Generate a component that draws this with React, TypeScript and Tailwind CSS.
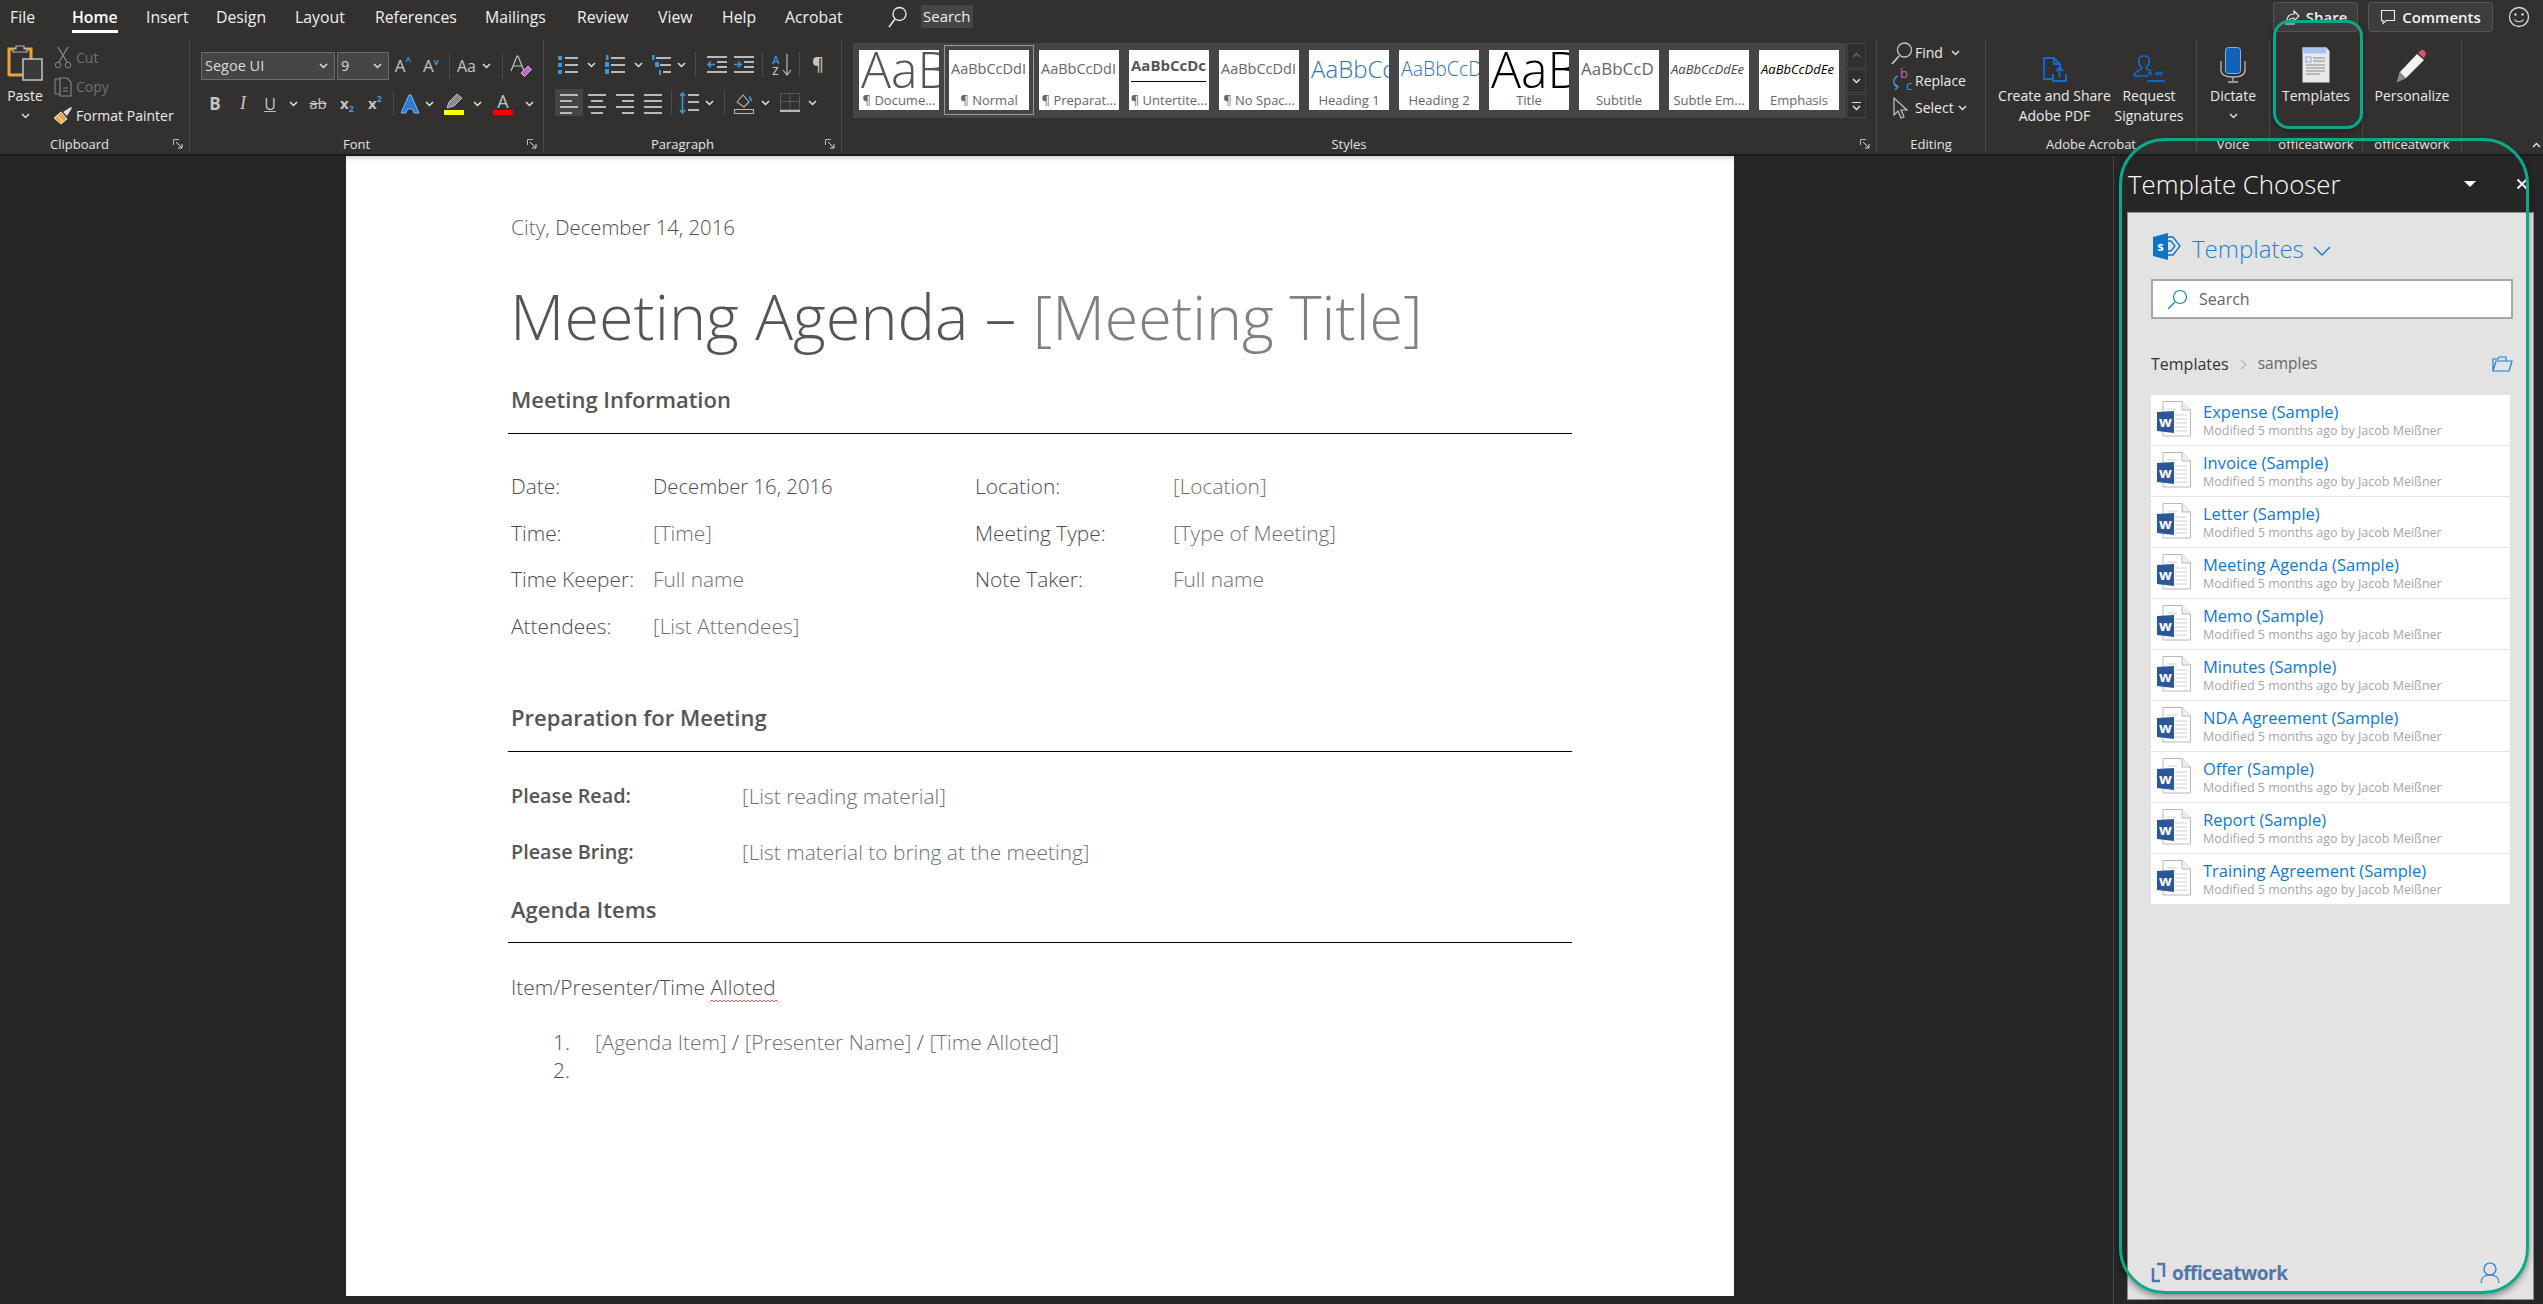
import type { ReactNode } from "react";

const tabs = [
  { name: "File", w: "w-[72px] pl-[10px]" },
  { name: "Home", w: "w-[74px]", active: true },
  { name: "Insert", w: "w-[70px]" },
  { name: "Design", w: "w-[79px]" },
  { name: "Layout", w: "w-[80px]" },
  { name: "References", w: "w-[110px]" },
  { name: "Mailings", w: "w-[92px]" },
  { name: "Review", w: "w-[81px]" },
  { name: "View", w: "w-[64px]" },
  { name: "Help", w: "w-[63px]" },
  { name: "Acrobat", w: "w-[90px]" },
];

const gallery = [
  { label: "¶ Docume...", sample: "AaB", cls: "text-[50px] font-light text-[#555] leading-[38px]" },
  { label: "¶ Normal", sample: "AaBbCcDdI", cls: "text-[14.5px] text-[#666] leading-[38px]", selected: true },
  { label: "¶ Preparat...", sample: "AaBbCcDdI", cls: "text-[14.5px] text-[#666] leading-[38px]" },
  { label: "¶ Untertite...", sample: "AaBbCcDc", cls: "text-[15px] font-bold text-[#555] leading-[31px] border-b border-black" },
  { label: "¶ No Spac...", sample: "AaBbCcDdI", cls: "text-[14.5px] text-[#666] leading-[38px]" },
  { label: "Heading 1", sample: "AaBbCc", cls: "text-[24px] font-light text-[#2e74b5] leading-[38px]" },
  { label: "Heading 2", sample: "AaBbCcD", cls: "text-[19.5px] font-light text-[#2e74b5] leading-[38px]" },
  { label: "Title", sample: "AaB", cls: "text-[50px] font-light text-black leading-[38px]" },
  { label: "Subtitle", sample: "AaBbCcD", cls: "text-[17px] text-[#666] leading-[38px]" },
  { label: "Subtle Em...", sample: "AaBbCcDdEe", cls: "text-[13px] italic text-[#444] leading-[38px]" },
  { label: "Emphasis", sample: "AaBbCcDdEe", cls: "text-[13px] italic text-black leading-[38px]" },
];

const templates = [
  "Expense (Sample)",
  "Invoice (Sample)",
  "Letter (Sample)",
  "Meeting Agenda (Sample)",
  "Memo (Sample)",
  "Minutes (Sample)",
  "NDA Agreement (Sample)",
  "Offer (Sample)",
  "Report (Sample)",
  "Training Agreement (Sample)",
];

const GRAY = "#b9b9b9";
const BLUE = "#3a96dd";

function Chevron({ color = "#e0e0e0" }: { color?: string }) {
  return (
    <svg width="9" height="6" viewBox="0 0 9 6" fill="none" className="shrink-0">
      <path d="M1 1l3.500 3.500L8 1" stroke={color} strokeWidth="1.500" />
    </svg>
  );
}

function Cell({ w, children, active }: { w: string; children?: ReactNode; active?: boolean }) {
  return (
    <div className={`${w} ${active ? "bg-[#454545]" : ""} h-[27px] shrink-0 flex items-center justify-center text-[#c4c4c4]`}>
      {children}
    </div>
  );
}

function ChevCell({ w }: { w: string }) {
  return (
    <Cell w={w}>
      <Chevron />
    </Cell>
  );
}

function Sep({ w }: { w: string }) {
  return (
    <Cell w={w}>
      <div className="w-px h-[25px] bg-[#4c4c4c] shrink-0" />
    </Cell>
  );
}

function Launcher() {
  return (
    <svg width="11" height="11" viewBox="0 0 11 11" fill="none" className="absolute right-[5px] top-[3px]">
      <path d="M.5 6V.5H6" stroke="#bbb" />
      <path d="M3 3l5.500 5.500M5 9h4V5" stroke="#ddd" />
    </svg>
  );
}

function Group({ w, label, launcher, pad = "", children }: { w: string; label: string; launcher?: boolean; pad?: string; children: ReactNode }) {
  return (
    <div className={`${w} h-[112px] shrink-0 flex flex-col border-r border-[#4a4a4a]`}>
      <div className="h-[96px] shrink-0">{children}</div>
      <div className={`${pad} relative h-[16px] leading-[16px] text-center text-[13px] text-[#e4e4e4] whitespace-nowrap`}>
        {label}
        {launcher && <Launcher />}
      </div>
    </div>
  );
}

function BigButton({ icon, lines, chevron, w }: { icon: ReactNode; lines: string[]; chevron?: boolean; w: string }) {
  return (
    <div className={`${w} shrink-0 flex flex-col items-center text-[14px] text-[#ececec] leading-[20px] whitespace-nowrap`}>
      <div className="h-[46px] w-full flex items-end justify-center pb-[3px]">{icon}</div>
      {lines.map((l) => (
        <div key={l}>{l}</div>
      ))}
      {chevron && (
        <div className="h-[20px] flex items-center">
          <Chevron />
        </div>
      )}
    </div>
  );
}

function LinesIcon({ rows, color = GRAY, w = 26 }: { rows: [number, number][]; color?: string; w?: number }) {
  return (
    <svg width={w} height="22" viewBox={`0 0 ${w} 22`} fill="none">
      {rows.map(([x, l], i) => (
        <rect key={i} x={x} y={2 + i * 6} width={l} height="2" fill={color} />
      ))}
    </svg>
  );
}

function PasteIcon() {
  return (
    <svg width="38" height="40" viewBox="0 0 38 40" fill="none">
      <path d="M3 33V6h22v26H3z" stroke="#e8a33d" strokeWidth="3" />
      <path d="M10 6V3h8v3h3v3H7V6z" stroke="#b5b5b5" strokeWidth="1.200" fill="#323130" />
      <rect x="17" y="16" width="19" height="21" fill="#3a3a3a" stroke="#c4c4c4" strokeWidth="1.500" />
    </svg>
  );
}

function WordIcon() {
  return (
    <svg width="34" height="36" viewBox="0 0 34 36" className="shrink-0">
      <path d="M6 .5h19L33.500 9v26H6z" fill="#fff" stroke="#b8b8b8" />
      <path d="M25 .5V9h8.500" fill="#eee" stroke="#b8b8b8" />
      <path d="M18 14h12M18 18h12M18 22h12M18 26h12M18 30h12M10 8h10" stroke="#cfcfcf" strokeWidth="1.200" />
      <path d="M0 11l17-1v22L0 30z" fill="#2b579a" />
      <text x="8.500" y="25.500" textAnchor="middle" fontSize="15" fontWeight="700" fill="#fff" fontFamily="Open Sans, sans-serif">
        w
      </text>
    </svg>
  );
}

function Wavy() {
  let d = "M0 3";
  for (let i = 0; i < 34; i++) d += i % 2 ? "l2 2" : "l2-2";
  return (
    <svg width="68" height="4" viewBox="0 0 68 4" className="absolute left-0 -bottom-[2px]" fill="none">
      <path d={d} stroke="#d9382e" strokeWidth=".8" />
    </svg>
  );
}

function Heading({ children }: { children: ReactNode }) {
  return <div className="pl-[3px] text-[22px] leading-[30px] font-semibold text-[#555]">{children}</div>;
}

function Rule({ className }: { className: string }) {
  return <div className={`h-px bg-black w-[1064px] ${className}`} />;
}

function Ribbon() {
  return (
    <div className="h-[156px] shrink-0 bg-[#323130] text-[#f0f0f0] border-b-[2px] border-[#1a1a1a]">
      <div className="h-[40px] flex items-start relative text-[15.8px]">
        {tabs.map((t) => (
          <div key={t.name} className={`${t.w} h-[36px] pt-[5px] leading-[24px] ${t.active ? "font-semibold text-white" : ""}`}>
            <span className={t.active ? "inline-block border-b-[3px] border-white pb-[2px] leading-[22px]" : ""}>{t.name}</span>
          </div>
        ))}
        <div className="ml-[13px] mt-[5px] flex items-center gap-[13px]">
          <svg width="20" height="22" viewBox="0 0 20 22" fill="none">
            <circle cx="11.500" cy="8" r="6.500" stroke="#eee" strokeWidth="1.300" />
            <path d="M7 13l-6 8" stroke="#eee" strokeWidth="1.500" />
          </svg>
          <span className="bg-[#454545] h-[23px] leading-[23px] px-[2px] text-[15px] text-[#f0f0f0]">Search</span>
        </div>
        <div className="ml-auto flex items-center mt-[2px] mr-[13px] text-[15px]">
          <div className="w-[85px] h-[30px] rounded-[3px] bg-[#3d3d3d] border border-[#555] flex items-center justify-center gap-[6px] font-semibold text-[#f4f4f4]">
            <svg width="16" height="16" viewBox="0 0 16 16" fill="none">
              <path d="M1 15h10M3 12c0-5 3-7 7-7V2l5 5-5 5V9c-3 0-5 1-6 4" stroke="#eee" strokeWidth="1.200" />
            </svg>
            Share
          </div>
          <div className="ml-[10px] w-[125px] h-[30px] rounded-[3px] bg-[#3d3d3d] border border-[#555] flex items-center justify-center gap-[6px] font-semibold text-[#f4f4f4]">
            <svg width="16" height="16" viewBox="0 0 16 16" fill="none">
              <path d="M1.500 1.500h13v10H6l-3 3v-3H1.500z" stroke="#eee" strokeWidth="1.100" />
            </svg>
            Comments
          </div>
          <svg width="22" height="22" viewBox="0 0 22 22" fill="none" className="ml-[15px]">
            <circle cx="11" cy="11" r="9.500" stroke="#ddd" strokeWidth="1.300" />
            <circle cx="7.500" cy="8.500" r="1.200" fill="#ddd" />
            <circle cx="14.500" cy="8.500" r="1.200" fill="#ddd" />
            <path d="M6.500 13.500c2 3 7 3 9 0" stroke="#ddd" strokeWidth="1.200" />
          </svg>
        </div>
      </div>

      <div className="flex text-[14px]">
        <Group w="w-[190px]" label="Clipboard" launcher pad="pr-[30px]">
          <div className="flex">
            <BigButton w="w-[50px]" icon={<PasteIcon />} lines={["Paste"]} chevron />
            <div className="pl-[4px] pt-[3px] flex flex-col text-[14px] leading-[29px]">
              <div className="flex items-center gap-[4px] text-[#707070]">
                <svg width="18" height="24" viewBox="0 0 18 24" fill="none">
                  <path d="M4 1l9 15M14 1L5 16" stroke="#8a8a8a" strokeWidth="1.300" />
                  <circle cx="4" cy="19" r="2.800" stroke="#8a8a8a" />
                  <circle cx="14" cy="19" r="2.800" stroke="#8a8a8a" />
                </svg>
                Cut
              </div>
              <div className="flex items-center gap-[4px] text-[#707070]">
                <svg width="18" height="22" viewBox="0 0 18 22" fill="none">
                  <path d="M6 3H1v15h5" stroke="#8a8a8a" />
                  <path d="M6 2h7l4 4v14H6zM9 12h5M9 15h5" stroke="#8a8a8a" strokeWidth="1.100" />
                </svg>
                Copy
              </div>
              <div className="flex items-center gap-[3px] -ml-px text-[#ececec]">
                <svg width="20" height="20" viewBox="0 0 20 20" fill="none">
                  <path d="M1 12l7-6 6 7-6 5z" fill="#eba741" stroke="#f5f5f5" strokeWidth=".9" />
                  <path d="M4 9l6 7" stroke="#f5f5f5" />
                  <path d="M10 6l8-5 1 1-5 8z" fill="#ddd" />
                </svg>
                Format Painter
              </div>
            </div>
          </div>
        </Group>

        <Group w="w-[354px]" label="Font" launcher pad="pr-[20px]">
          <div className="pl-[11px] pt-[12px] flex flex-col gap-[10px]">
            <div className="flex items-center">
              <div className="w-[134px] h-[28px] bg-[#454545] border border-[#6c6c6c] flex items-center justify-between pl-[3px] pr-[6px] text-[14.5px] text-[#dcdcdc]">
                Segoe UI
                <Chevron />
              </div>
              <div className="ml-[2px] w-[52px] h-[28px] bg-[#454545] border border-[#6c6c6c] flex items-center justify-between pl-[3px] pr-[6px] text-[14.5px] text-[#dcdcdc]">
                9
                <Chevron />
              </div>
              <Cell w="w-[28px]">
                <span className="text-[17px]">A</span>
                <span className="text-[10px] -mt-[10px] font-bold text-[#3a96dd]">^</span>
              </Cell>
              <Cell w="w-[28px]">
                <span className="text-[17px]">A</span>
                <span className="text-[9px] -mt-[9px] font-bold text-[#3a96dd]">v</span>
              </Cell>
              <Sep w="w-[8px]" />
              <Cell w="w-[27px]">
                <span className="text-[16px]">Aa</span>
              </Cell>
              <ChevCell w="w-[12px]" />
              <Sep w="w-[20px]" />
              <Cell w="w-[18px]">
                <svg width="22" height="24" viewBox="0 0 22 24" fill="none" className="shrink-0">
                  <path d="M1 17L7 2h1l6 15M3 12h9" stroke="#c4c4c4" strokeWidth="1.200" />
                  <path d="M11 19l7-7 3.500 3.500-7 7z" fill="#b968c7" stroke="#e6a9ee" />
                </svg>
              </Cell>
            </div>
            <div className="flex items-center">
              <Cell w="w-[28px]"><span className="font-bold text-[17px]">B</span></Cell>
              <Cell w="w-[28px]"><span className="italic font-['Liberation_Serif'] text-[18px]">I</span></Cell>
              <Cell w="w-[26px]"><span className="underline text-[16px]">U</span></Cell>
              <ChevCell w="w-[20px]" />
              <Cell w="w-[30px]"><span className="line-through text-[15px]">ab</span></Cell>
              <Cell w="w-[28px]"><span className="font-bold text-[15px]">x</span><span className="text-[9px] font-bold text-[#3a96dd] mt-[10px]">2</span></Cell>
              <Cell w="w-[28px]"><span className="font-bold text-[15px]">x</span><span className="text-[9px] font-bold text-[#3a96dd] -mt-[10px]">2</span></Cell>
              <Sep w="w-[8px]" />
              <Cell w="w-[26px]">
                <svg width="22" height="22" viewBox="0 0 22 22" fill="none">
                  <path d="M2 20L10 2h2l8 18h-5l-1.500-4h-5L7 20z" fill="#2b7cd3" stroke="#7ab8ee" />
                </svg>
              </Cell>
              <ChevCell w="w-[12px]" />
              <Cell w="w-[38px]">
                <div className="flex flex-col items-center">
                  <svg width="20" height="17" viewBox="0 0 20 17" fill="none">
                    <path d="M3 15l2-6L13 1l5 4-8 8z" fill="#8a8a8a" stroke="#bbb" />
                  </svg>
                  <div className="w-[20px] h-[5px] bg-[#ffff00]" />
                </div>
              </Cell>
              <ChevCell w="w-[8px]" />
              <Cell w="w-[44px]">
                <div className="flex flex-col items-center">
                  <span className="text-[18px] leading-[18px]">A</span>
                  <div className="w-[20px] h-[5px] bg-[#ff0000]" />
                </div>
              </Cell>
              <ChevCell w="w-[8px]" />
            </div>
          </div>
        </Group>

        <Group w="w-[298px]" label="Paragraph" launcher pad="pr-[20px]">
          <div className="pt-[11px] flex flex-col gap-[11px]">
            <div className="flex items-center pl-[9px]">
              <Cell w="w-[30px]">
                <svg width="20" height="20" viewBox="0 0 20 20">
                  <rect y="1" width="4" height="4" fill={BLUE} /><rect y="8" width="4" height="4" fill={BLUE} /><rect y="15" width="4" height="4" fill={BLUE} />
                  <rect x="7" y="2" width="13" height="2" fill={GRAY} /><rect x="7" y="9" width="13" height="2" fill={GRAY} /><rect x="7" y="16" width="13" height="2" fill={GRAY} />
                </svg>
              </Cell>
              <ChevCell w="w-[16px]" />
              <Cell w="w-[31px]">
                <svg width="20" height="22" viewBox="0 0 20 22">
                  <rect x="6" y="3" width="14" height="2" fill={GRAY} /><rect x="6" y="10" width="14" height="2" fill={GRAY} /><rect x="6" y="17" width="14" height="2" fill={GRAY} />
                  <rect x="1" y="1" width="2.500" height="5" fill={BLUE} /><rect x="0" y="8" width="4" height="5" fill={BLUE} /><rect x="0" y="15" width="4" height="5" fill={BLUE} />
                </svg>
              </Cell>
              <ChevCell w="w-[16px]" />
              <Cell w="w-[29px]">
                <svg width="20" height="22" viewBox="0 0 20 22">
                  <rect x="5" y="3" width="15" height="2" fill={GRAY} /><rect x="9" y="10" width="11" height="2" fill={GRAY} /><rect x="12" y="17" width="8" height="2" fill={GRAY} />
                  <rect x="1" y="1" width="2.500" height="5" fill={BLUE} /><rect x="4" y="8" width="4" height="5" fill={BLUE} /><rect x="8" y="16" width="2" height="5" fill={BLUE} />
                </svg>
              </Cell>
              <ChevCell w="w-[12px]" />
              <Sep w="w-[16px]" />
              <Cell w="w-[27px]">
                <svg width="20" height="20" viewBox="0 0 20 20" fill="none">
                  <rect y="1" width="20" height="2" fill={GRAY} /><rect x="10" y="6" width="10" height="2" fill={GRAY} /><rect x="10" y="11" width="10" height="2" fill={GRAY} /><rect y="16" width="20" height="2" fill={GRAY} />
                  <path d="M8 9.500H1M4 6.500l-3 3 3 3" stroke={BLUE} strokeWidth="1.600" />
                </svg>
              </Cell>
              <Cell w="w-[28px]">
                <svg width="20" height="20" viewBox="0 0 20 20" fill="none">
                  <rect y="1" width="20" height="2" fill={GRAY} /><rect x="10" y="6" width="10" height="2" fill={GRAY} /><rect x="10" y="11" width="10" height="2" fill={GRAY} /><rect y="16" width="20" height="2" fill={GRAY} />
                  <path d="M0 9.500h7M4 6.500l3 3-3 3" stroke={BLUE} strokeWidth="1.600" />
                </svg>
              </Cell>
              <Sep w="w-[8px]" />
              <Cell w="w-[32px]">
                <span className="flex flex-col text-[11px] leading-[11px] font-semibold">
                  <span className="text-[#3a96dd]">A</span>
                  <span>Z</span>
                </span>
                <svg width="10" height="22" viewBox="0 0 10 22" fill="none" className="ml-[2px]">
                  <path d="M5 0v20M1 16l4 5 4-5" stroke={GRAY} strokeWidth="1.200" />
                </svg>
              </Cell>
              <Sep w="w-[2px]" />
              <Cell w="w-[36px]">
                <span className="text-[18px] font-semibold">¶</span>
              </Cell>
            </div>
            <div className="flex items-center pl-[11px]">
              <Cell w="w-[28px]" active><LinesIcon w={18} rows={[[0, 18], [0, 12], [0, 18], [0, 12]]} /></Cell>
              <Cell w="w-[28px]"><LinesIcon w={18} rows={[[0, 18], [3, 12], [0, 18], [3, 12]]} /></Cell>
              <Cell w="w-[28px]"><LinesIcon w={18} rows={[[0, 18], [6, 12], [0, 18], [6, 12]]} /></Cell>
              <Cell w="w-[28px]"><LinesIcon w={18} rows={[[0, 18], [0, 18], [0, 18], [0, 18]]} /></Cell>
              <Sep w="w-[8px]" />
              <Cell w="w-[28px]">
                <svg width="20" height="22" viewBox="0 0 20 22" fill="none">
                  <rect x="9" y="2" width="11" height="2" fill={GRAY} /><rect x="9" y="9" width="11" height="2" fill={GRAY} /><rect x="9" y="17" width="11" height="2" fill={GRAY} />
                  <path d="M3.500 1v20M1 4l2.500-3L6 4M1 18l2.500 3L6 18" stroke={BLUE} strokeWidth="1.600" />
                </svg>
              </Cell>
              <ChevCell w="w-[12px]" />
              <Sep w="w-[18px]" />
              <Cell w="w-[22px]">
                <svg width="20" height="22" viewBox="0 0 20 22" fill="none">
                  <path d="M3 10l6-7 6 7-5 5z" stroke={GRAY} strokeWidth="1.100" />
                  <path d="M15 4c2 0 3 2 3 6-2-1-3-3-3-6z" fill={BLUE} />
                  <rect x=".5" y="17.500" width="19" height="4" stroke={GRAY} />
                </svg>
              </Cell>
              <ChevCell w="w-[20px]" />
              <Cell w="w-[30px]">
                <svg width="20" height="20" viewBox="0 0 20 20" fill="none">
                  <path d="M.5 .5h19v16H.5zM10 .5v16M.5 8.500h19" stroke="#6a6a6a" strokeDasharray="2 1" />
                  <rect y="17" width="20" height="2" fill={GRAY} />
                </svg>
              </Cell>
              <ChevCell w="w-[14px]" />
            </div>
          </div>
        </Group>

        <Group w="w-[1035px]" label="Styles" launcher pad="pr-[20px]">
          <div className="flex pt-[3px] pl-[11px]">
            <div className="w-[993px] h-[75px] bg-[#454545] flex gap-[10px] pl-[6px] pt-[7px]">
              {gallery.map((g) => (
                <div key={g.label} className={`w-[80px] h-[60px] bg-white shrink-0 flex flex-col ${g.selected ? "outline outline-[#9a9a9a] outline-offset-4" : ""}`}>
                  <div className="h-[38px] shrink-0 overflow-hidden whitespace-nowrap pl-[2px]">
                    <span className={`${g.cls} inline-block`}>{g.sample}</span>
                  </div>
                  <div className="h-[22px] leading-[24px] text-[13px] text-[#666] text-center whitespace-nowrap overflow-hidden">{g.label}</div>
                </div>
              ))}
            </div>
            <div className="w-[19px] flex flex-col gap-px ml-px">
              <div className="h-[25px] bg-[#2f2f2f] border border-[#454545] flex items-center justify-center rotate-180"><Chevron color="#666" /></div>
              <div className="h-[24px] bg-[#2f2f2f] border border-[#454545] flex items-center justify-center"><Chevron /></div>
              <div className="h-[24px] bg-[#2f2f2f] border border-[#454545] flex flex-col items-center justify-center gap-[2px]">
                <div className="w-[9px] h-px bg-[#ddd]" />
                <Chevron />
              </div>
            </div>
          </div>
        </Group>

        <Group w="w-[109px]" label="Editing">
          <div className="pl-[14px] -mt-px flex flex-col leading-[27px] text-[14px] text-[#ececec]">
            <div className="flex items-center gap-[2px] h-[27px]">
              <svg width="22" height="24" viewBox="0 0 22 24" fill="none">
                <circle cx="13.500" cy="9" r="7" stroke="#c4c4c4" strokeWidth="1.300" />
                <path d="M8 15l-7 8" stroke="#c4c4c4" strokeWidth="1.800" />
              </svg>
              Find
              <span className="ml-[6px]"><Chevron /></span>
            </div>
            <div className="flex items-center gap-[2px] h-[28px]">
              <svg width="22" height="24" viewBox="0 0 22 24" fill="none">
                <text x="9" y="10" fontSize="13" fill="#b968c7" fontFamily="Open Sans, sans-serif">b</text>
                <text x="15" y="22" fontSize="13" fill="#3a96dd" fontFamily="Open Sans, sans-serif">c</text>
                <path d="M7 8c-5 2-6 9 0 11M4 16l3 3-3 3" stroke="#3a96dd" strokeWidth="1.400" />
              </svg>
              Replace
            </div>
            <div className="flex items-center gap-[2px] h-[27px]">
              <svg width="22" height="24" viewBox="0 0 22 24" fill="none">
                <path d="M3 2v17l4-4 3 7 3-1-3-7h6z" stroke="#c4c4c4" strokeWidth="1.200" />
              </svg>
              Select
              <span className="ml-[2px]"><Chevron /></span>
            </div>
          </div>
        </Group>

        <Group w="w-[211px]" label="Adobe Acrobat">
          <div className="flex pl-[7px]">
            <BigButton
              w="w-[123px]"
              lines={["Create and Share", "Adobe PDF"]}
              icon={
                <svg width="24" height="26" viewBox="0 0 24 26" fill="none">
                  <path d="M9 22H1V1h10l6 6v5M11 1v6h6" stroke="#0f6cdb" strokeWidth="1.800" />
                  <path d="M10 17v7h13v-7M16.500 20v-9M13 14l3.500-3.500L20 14" stroke="#0f6cdb" strokeWidth="1.800" />
                </svg>
              }
            />
            <BigButton
              w="w-[66px]"
              lines={["Request", "Signatures"]}
              icon={
                <svg width="32" height="28" viewBox="0 0 32 28" fill="none">
                  <path d="M1 21c0-6 8-5 8-8-3-3-4-6-3-9 1-4 9-4 10 0 1 3 0 6-3 9 1 2 4 2 5 3M1 21h14" stroke="#0f6cdb" strokeWidth="1.600" />
                  <path d="M15 17l4 3m0-3l-4 3M22 20l2-3 1 3 2-3 1 3 2-3" stroke="#0f6cdb" strokeWidth="1.200" />
                  <path d="M14 26h18" stroke="#0f6cdb" strokeWidth="1.800" />
                </svg>
              }
            />
          </div>
        </Group>

        <Group w="w-[73px]" label="Voice">
          <BigButton
            w="w-full"
            lines={["Dictate"]}
            chevron
            icon={
              <svg width="26" height="36" viewBox="0 0 26 36" fill="none">
                <rect x="5.500" y=".5" width="15" height="26" rx="3" fill="#0f62b8" stroke="#7fb2e5" />
                <path d="M1 14v9c0 5 4 7 12 7s12-2 12-7v-9M13 30v4M8 35h10" stroke="#b9b9b9" strokeWidth="1.300" />
              </svg>
            }
          />
        </Group>

        <Group w="w-[93px]" label="officeatwork">
          <BigButton
            w="w-full"
            lines={["Templates"]}
            icon={
              <svg width="28" height="36" viewBox="0 0 28 36" fill="none">
                <path d="M.5 .5h24L27.500 4v31.500H.5z" fill="#e9e9e9" />
                <rect x=".5" y=".5" width="24" height="6" fill="#a9c4f2" />
                <rect x="4" y="10" width="5" height="5" fill="#e6eefc" stroke="#7ea6ea" />
                <path d="M11 11h12M11 14h12M4 18h19M4 21h19M4 24h19M4 27h14" stroke="#8a8a8a" />
              </svg>
            }
          />
        </Group>

        <Group w="w-[99px]" label="officeatwork">
          <BigButton
            w="w-full"
            lines={["Personalize"]}
            icon={
              <svg width="32" height="34" viewBox="0 0 32 34" fill="none">
                <path d="M1 33l3-10L21 5l7 6L10 29z" fill="#f2f2f2" />
                <path d="M1 33l3-10 6 6z" fill="#8a8a8a" />
                <path d="M22 4l3-3c2-1 5 2 5 4l-2 4z" fill="#d9546f" />
              </svg>
            }
          />
        </Group>

        <div className="flex-1 flex items-end justify-end pr-[2px] pb-[4px]">
          <span className="rotate-180 pr-[2px]"><Chevron /></span>
        </div>
      </div>
    </div>
  );
}

function Page() {
  return (
    <div className="w-[1388px] h-[1140px] ml-[346px] bg-white shrink-0 pl-[162px] pt-[57px] font-light text-[20.9px] text-[#666] shadow-[inset_0_6px_6px_-6px_rgba(0,0,0,0.35)]">
      <div className="pl-[3px] leading-[28px]">
        City, <span className="text-[20.3px] text-[#4d4d4d]">December 14, 2016</span>
      </div>
      <div className="pl-[2px] mt-[31px] text-[63px] leading-[88px] whitespace-nowrap text-[#555]">
        Meeting Agenda – <span className="text-[61px] text-[#808080]">[Meeting Title]</span>
      </div>
      <div className="mt-[23px]"><Heading>Meeting Information</Heading></div>
      <Rule className="mt-[19px]" />
      <div className="mt-[29px] pl-[3px] grid grid-cols-[142px_322px_198px_1fr] auto-rows-[46.5px] items-start leading-[46px] text-[#707070]">
        <span className="text-[#4d4d4d]">Date:</span><span className="text-[20.3px] text-[#4d4d4d]">December 16, 2016</span><span className="text-[#4d4d4d]">Location:</span><span>[Location]</span>
        <span className="text-[#4d4d4d]">Time:</span><span>[Time]</span><span className="text-[#4d4d4d]">Meeting Type:</span><span>[Type of Meeting]</span>
        <span className="text-[#4d4d4d]">Time Keeper:</span><span>Full name</span><span className="text-[#4d4d4d]">Note Taker:</span><span>Full name</span>
        <span className="text-[#4d4d4d]">Attendees:</span><span>[List Attendees]</span>
      </div>
      <div className="mt-[53px]"><Heading>Preparation for Meeting</Heading></div>
      <Rule className="mt-[19px]" />
      <div className="pl-[3px] mt-[23px] grid grid-cols-[231px_1fr] auto-rows-[56px] leading-[42px] text-[#707070]">
        <span className="text-[19.8px] font-semibold text-[#555]">Please Read:</span><span>[List reading material]</span>
        <span className="text-[19.8px] font-semibold text-[#555]">Please Bring:</span><span>[List material to bring at the meeting]</span>
      </div>
      <div className="mt-[7px]"><Heading>Agenda Items</Heading></div>
      <Rule className="mt-[18px]" />
      <div className="pl-[3px] mt-[29px] leading-[30px] text-[#4d4d4d]">
        Item/Presenter/Time{" "}
        <span className="relative">
          Alloted
          <Wavy />
        </span>
      </div>
      <div className="pl-[45px] mt-[26px] leading-[28px] text-[#4d4d4d]">
        <div className="flex">
          <span className="w-[42px]">1.</span>
          <span className="text-[#707070]">[Agenda Item] <span className="text-[#4d4d4d]">/</span> [Presenter Name] <span className="text-[#4d4d4d]">/</span> [Time Alloted]</span>
        </div>
        <div>2.</div>
      </div>
    </div>
  );
}

function Panel() {
  return (
    <div className="w-[430px] shrink-0 border-l border-[#474747] pl-[13px] flex flex-col">
      <div className="h-[56px] shrink-0 flex items-center justify-between pr-[9px] text-white">
        <span className="text-[25.8px] font-light whitespace-nowrap pl-px">Template Chooser</span>
        <div className="flex items-center gap-[40px] pr-[6px]">
          <div className="w-0 h-0 border-x-[6px] border-x-transparent border-t-[6px] border-t-white" />
          <svg width="12" height="12" viewBox="0 0 12 12" fill="none">
            <path d="M1.500 1.500l9 9M10.500 1.500l-9 9" stroke="#f0f0f0" strokeWidth="2" />
          </svg>
        </div>
      </div>
      <div className="w-[407px] h-[1088px] bg-[#e3e3e3] border border-[#8c8c8c] pl-[23px] pr-[22px] flex flex-col">
        <div className="h-[66px] shrink-0 flex items-center pl-[2px] pt-[5px]">
          <svg width="28" height="27" viewBox="0 0 28 27" fill="none" className="shrink-0 -mt-[5px]">
            <path d="M0 4l15-4v27L0 23z" fill="#0b72c4" />
            <text x="7.500" y="18" textAnchor="middle" fontSize="13" fontWeight="700" fill="#fff" fontFamily="Open Sans, sans-serif">s</text>
            <path d="M15 4h5l7 9-7 9h-5M15 8h3l4 5-4 5h-3" stroke="#0b72c4" strokeWidth="1.300" />
          </svg>
          <span className="ml-[11px] text-[24px] font-light text-[#1e7fd6]">Templates</span>
          <svg width="18" height="10" viewBox="0 0 18 10" fill="none" className="ml-[9px] mt-[4px]">
            <path d="M1 1l8 8 8-8" stroke="#1e7fd6" strokeWidth="1.500" />
          </svg>
        </div>
        <div className="h-[40px] shrink-0 bg-white border-2 border-[#a8a8a8] flex items-center pl-[14px] gap-[11px] text-[16px] text-[#666] w-[362px]">
          <svg width="21" height="21" viewBox="0 0 21 21" fill="none">
            <circle cx="13" cy="8" r="6.500" stroke="#1e7fd6" strokeWidth="1.200" />
            <path d="M8 13l-7 7" stroke="#1e7fd6" strokeWidth="1.300" />
          </svg>
          Search
        </div>
        <div className="h-[76px] shrink-0 flex items-center w-[362px] text-[16px] pt-[14px]">
          <span className="text-[#333]">Templates</span>
          <svg width="7" height="11" viewBox="0 0 7 11" fill="none" className="mx-[11px]">
            <path d="M1 1l5 4.500L1 10" stroke="#999" />
          </svg>
          <span className="text-[15.5px] text-[#666]">samples</span>
          <svg width="21" height="16" viewBox="0 0 21 16" fill="none" className="ml-auto">
            <path d="M1 15V3h5l1-2h7v4M1 15l3-10h16l-3 10z" stroke="#1e7fd6" strokeWidth="1.200" />
          </svg>
        </div>
        <div className="w-[359px] flex flex-col">
          {templates.map((t) => (
            <div key={t} className="h-[51px] shrink-0 bg-white border-b border-[#e3e3e3] flex items-start pt-[6px] pl-[6px] gap-[12px]">
              <WordIcon />
              <div className="flex flex-col -mt-[1px]">
                <span className="text-[16.5px] leading-[23px] text-[#0f78d4] whitespace-nowrap">{t}</span>
                <span className="text-[12.5px] leading-[16px] text-[#a6a6a6] font-medium whitespace-nowrap">Modified 5 months ago by Jacob Meißner</span>
              </div>
            </div>
          ))}
        </div>
        <div className="mt-auto h-[37px] shrink-0 flex items-start justify-between pr-[11px]">
          <div className="flex items-center gap-[6px] text-[#4f76a8]">
            <svg width="15" height="22" viewBox="0 0 15 22" fill="none">
              <path d="M2 6v13h7M6 2h7v13" stroke="#4f76a8" strokeWidth="2.500" />
            </svg>
            <span className="text-[19px] font-bold leading-[22px] tracking-[-0.5px]">officeatwork</span>
          </div>
          <svg width="20" height="22" viewBox="0 0 20 22" fill="none">
            <circle cx="10" cy="7" r="6" stroke="#1e7fd6" strokeWidth="1.200" />
            <path d="M1 21c0-6 4-8 9-8s9 2 9 8" stroke="#1e7fd6" strokeWidth="1.200" />
          </svg>
        </div>
      </div>
    </div>
  );
}

export default function App() {
  return (
    <div className="relative w-[2543px] h-[1304px] overflow-hidden bg-[#262626] font-['Open_Sans',sans-serif]">
      <Ribbon />
      <div className="flex h-[1148px]">
        <div className="w-[2113px] shrink-0">
          <Page />
        </div>
        <Panel />
      </div>
      <div className="absolute left-[2273px] top-[20px] w-[90px] h-[109px] rounded-[16px] border-[3px] border-[#0aa98b] shadow-[0_2px_6px_rgba(0,0,0,0.4)]" />
      <div className="absolute left-[2119px] top-[138px] w-[410px] h-[1156px] rounded-[46px] border-[3px] border-[#0aa98b] shadow-[0_3px_6px_rgba(0,0,0,0.4)]" />
    </div>
  );
}
